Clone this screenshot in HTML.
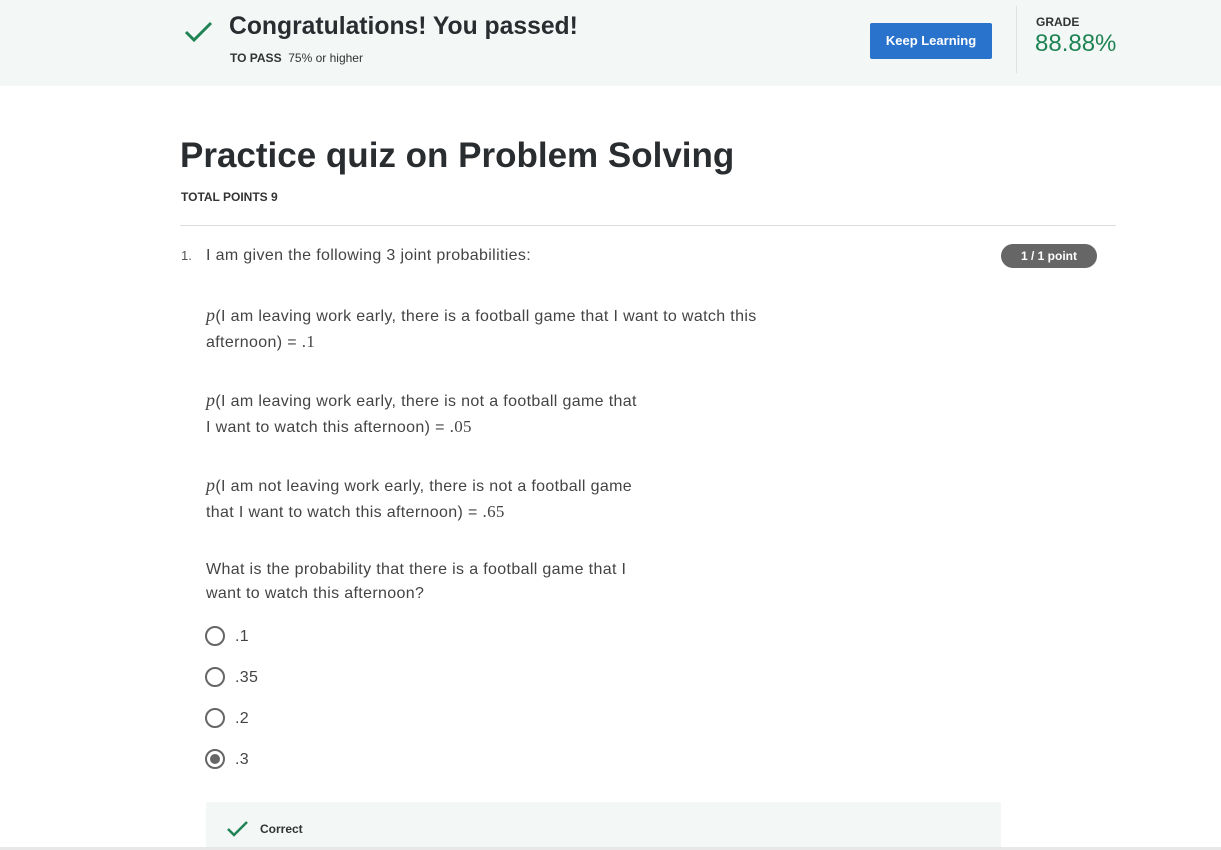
<!DOCTYPE html>
<html><head><meta charset="utf-8"><style>
*{margin:0;padding:0;box-sizing:border-box}
body{width:1221px;height:850px;overflow:hidden;background:#fff;font-family:"Liberation Sans",sans-serif;color:#373a3c;position:relative}
.top{position:absolute;left:0;top:0;width:1221px;height:86px;background:#f3f8f7}
.a{position:absolute;white-space:nowrap}
.btn{position:absolute;left:870px;top:23px;width:122px;height:36px;background:#2a73cc;border-radius:2px;color:#fff;font-weight:bold;font-size:13px;text-align:center;line-height:36px}
.radio{position:absolute;left:205px;width:20px;height:20px;border:2px solid #666;border-radius:50%}
.q{font-size:16px;color:#444;line-height:25px;letter-spacing:0.35px}
.m{font-family:"Liberation Serif",serif;font-style:italic;font-size:18px}
.n{font-family:"Liberation Serif",serif;font-size:17px}
</style></head><body>
<div class="top"></div>
<svg class="a" style="left:184px;top:20px" width="30" height="24" viewBox="0 0 30 24"><path d="M2 12 L10 20 L27 3" fill="none" stroke="#1f8354" stroke-width="3"/></svg>
<div class="a" style="left:229px;top:13px;font-size:24.7px;font-weight:bold;color:#2a2d30">Congratulations! You passed!</div>
<div class="a" style="left:230px;top:51px;font-size:12px;color:#333"><b>TO PASS</b>&nbsp; 75% or higher</div>
<div class="btn">Keep Learning</div>
<div class="a" style="left:1016px;top:6px;width:1px;height:67px;background:#dde2e2"></div>
<div class="a" style="left:1036px;top:15px;font-size:12px;font-weight:bold;color:#333">GRADE</div>
<div class="a" style="left:1035px;top:30px;font-size:24px;color:#1f8354">88.88%</div>
<div class="a" style="left:180px;top:136px;font-size:35px;font-weight:bold;color:#2a2d30">Practice quiz on Problem Solving</div>
<div class="a" style="left:181px;top:190px;font-size:12px;font-weight:bold;color:#333">TOTAL POINTS 9</div>
<div class="a" style="left:180px;top:225px;width:936px;height:1px;background:#ddd"></div>
<div class="a" style="left:181px;top:248px;font-size:13px;color:#555">1.</div>
<div class="a q" style="left:206px;top:243px">I am given the following 3 joint probabilities:</div>
<div class="a" style="left:1001px;top:244px;width:96px;height:24px;background:#666;border-radius:12px;color:#fff;font-size:12px;font-weight:bold;text-align:center;line-height:24px">1 / 1 point</div>
<div class="a q" style="left:206px;top:303px"><span class="m">p</span>(I am leaving work early, there is a football game that I want to watch this<br>afternoon) = <span class="n">.1</span></div>
<div class="a q" style="left:206px;top:388px"><span class="m">p</span>(I am leaving work early, there is not a football game that<br>I want to watch this afternoon) = <span class="n">.05</span></div>
<div class="a q" style="left:206px;top:473px"><span class="m">p</span>(I am not leaving work early, there is not a football game<br>that I want to watch this afternoon) = <span class="n">.65</span></div>
<div class="a q" style="left:206px;top:558px;line-height:24px">What is the probability that there is a football game that I<br>want to watch this afternoon?</div>
<div class="radio" style="top:626px"></div><div class="a q" style="left:235px;top:624px">.1</div>
<div class="radio" style="top:667px"></div><div class="a q" style="left:235px;top:665px">.35</div>
<div class="radio" style="top:708px"></div><div class="a q" style="left:235px;top:706px">.2</div>
<div class="radio" style="top:749px"><div style="position:absolute;left:3px;top:3px;width:10px;height:10px;border-radius:50%;background:#666"></div></div><div class="a q" style="left:235px;top:747px">.3</div>
<div class="a" style="left:206px;top:802px;width:795px;height:48px;background:#f3f8f7"></div>
<svg class="a" style="left:227px;top:820px" width="22" height="18" viewBox="0 0 22 18"><path d="M1 9 L7 15 L20 2" fill="none" stroke="#1f8354" stroke-width="2.5"/></svg>
<div class="a" style="left:260px;top:822px;font-size:12px;font-weight:bold;color:#333">Correct</div>
<div class="a" style="left:0;top:847px;width:1221px;height:3px;background:#e8e8e8"></div>
</body></html>
